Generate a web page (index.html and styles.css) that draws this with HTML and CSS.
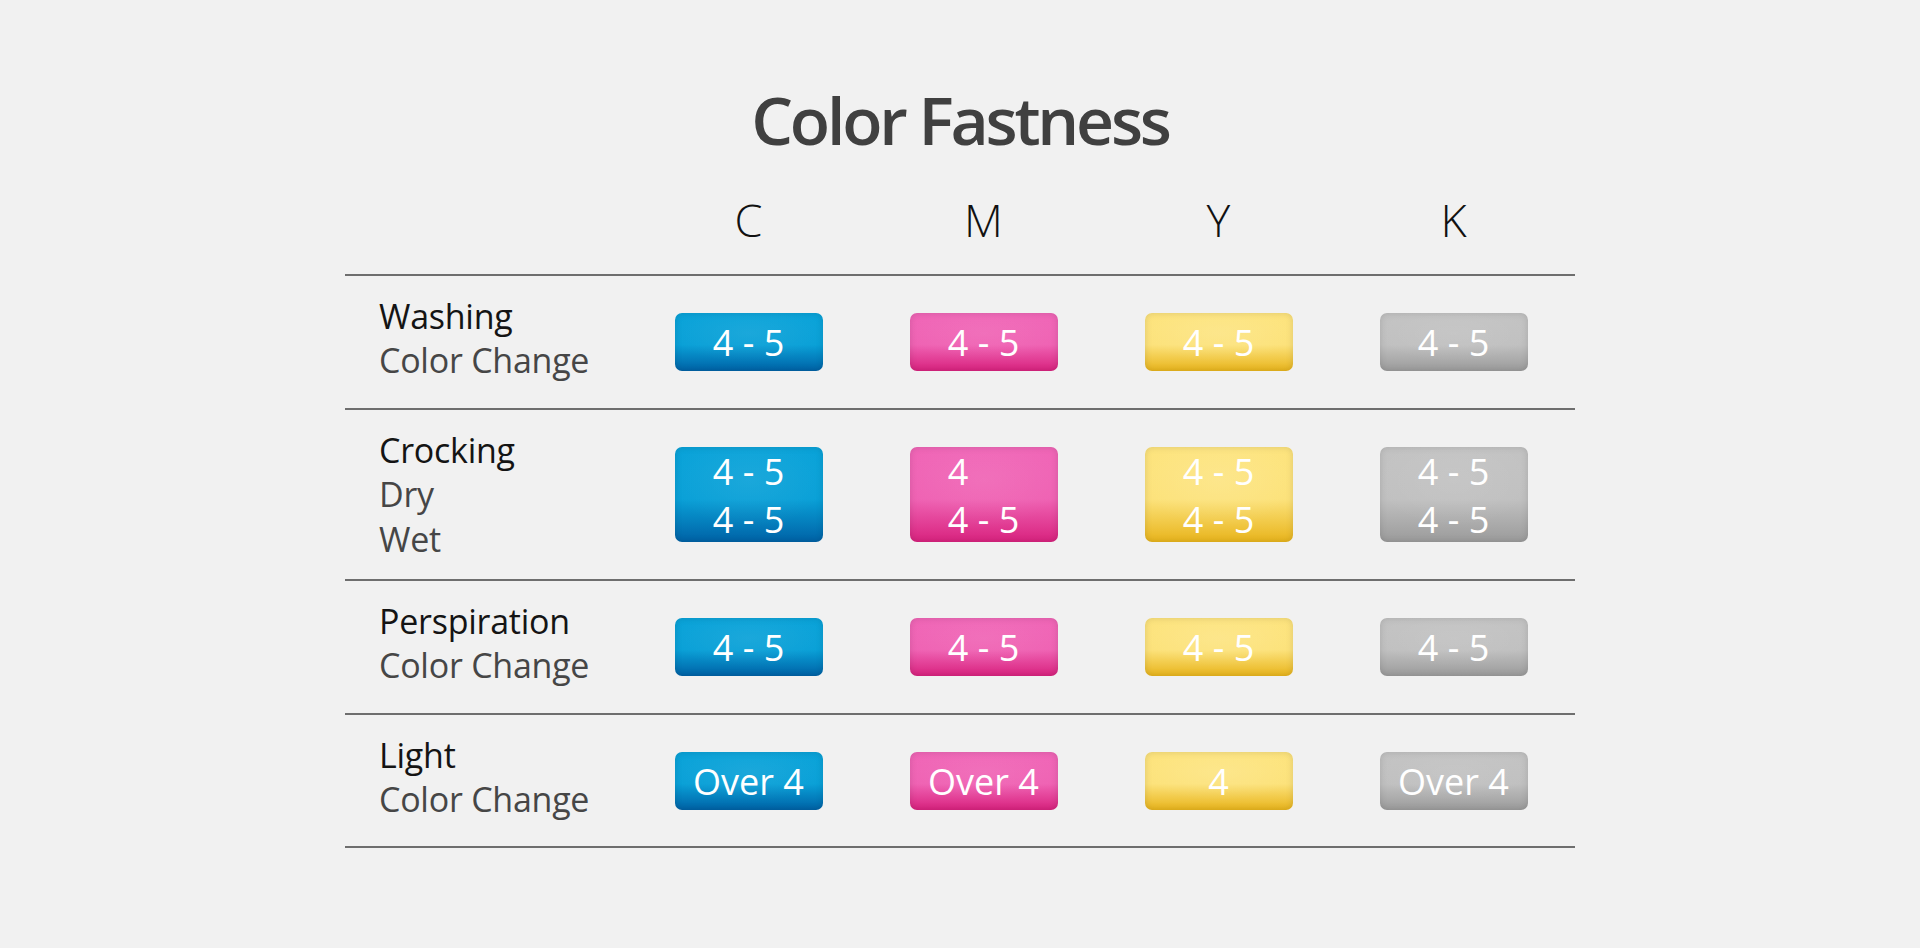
FILE: index.html
```html
<!DOCTYPE html>
<html lang="en">
<head>
<meta charset="utf-8">
<title>Color Fastness</title>
<link rel="stylesheet" href="styles.css">
</head>
<body>
<main class="page">
  <h1 class="title">Color Fastness</h1>
  <section class="table">
    <div class="row head">
      <div class="label"></div>
      <div class="col">C</div>
      <div class="col">M</div>
      <div class="col">Y</div>
      <div class="col">K</div>
    </div>

    <div class="row r1">
      <div class="label lift"><span class="main">Washing</span><span class="sub">Color Change</span></div>
      <div class="cell"><div class="badge cyan"><span>4 - 5</span></div></div>
      <div class="cell"><div class="badge magenta"><span>4 - 5</span></div></div>
      <div class="cell"><div class="badge yellow"><span>4 - 5</span></div></div>
      <div class="cell"><div class="badge gray"><span>4 - 5</span></div></div>
    </div>

    <div class="row r2">
      <div class="label"><span class="main">Crocking</span><span class="sub">Dry</span><span class="sub">Wet</span></div>
      <div class="cell"><div class="badge double cyan"><span>4 - 5<br>4 - 5</span></div></div>
      <div class="cell"><div class="badge double magenta"><span>4<br>4 - 5</span></div></div>
      <div class="cell"><div class="badge double yellow"><span>4 - 5<br>4 - 5</span></div></div>
      <div class="cell"><div class="badge double gray"><span>4 - 5<br>4 - 5</span></div></div>
    </div>

    <div class="row r3">
      <div class="label lift"><span class="main">Perspiration</span><span class="sub">Color Change</span></div>
      <div class="cell"><div class="badge cyan"><span>4 - 5</span></div></div>
      <div class="cell"><div class="badge magenta"><span>4 - 5</span></div></div>
      <div class="cell"><div class="badge yellow"><span>4 - 5</span></div></div>
      <div class="cell"><div class="badge gray"><span>4 - 5</span></div></div>
    </div>

    <div class="row r4">
      <div class="label lift"><span class="main">Light</span><span class="sub">Color Change</span></div>
      <div class="cell"><div class="badge cyan"><span>Over 4</span></div></div>
      <div class="cell"><div class="badge magenta"><span>Over 4</span></div></div>
      <div class="cell"><div class="badge yellow"><span>4</span></div></div>
      <div class="cell"><div class="badge gray"><span>Over 4</span></div></div>
    </div>
  </section>
</main>
</body>
</html>
```

FILE: styles.css
```css
* { box-sizing: border-box; }

html, body {
  margin: 0;
  padding: 0;
  background: #f1f1f1;
}

body {
  font-family: "Open Sans", "Liberation Sans", sans-serif;
  width: 1920px;
  height: 948px;
  overflow: hidden;
}

.page {
  display: flex;
  flex-direction: column;
  align-items: center;
  padding-top: 79px;
}

.title {
  margin: 0 0 31px;
  font-size: 66px;
  line-height: 80px;
  font-weight: 600;
  color: #404040;
  letter-spacing: -3.2px;
}

.table {
  width: 1230px;
  display: flex;
  flex-direction: column;
}

.row {
  display: grid;
  grid-template-columns: 286px repeat(4, 235px);
  align-items: center;
  border-bottom: 2px solid #6e6e6e;
}

.head {
  padding-bottom: 24px;
}

.col {
  text-align: center;
  font-size: 45px;
  line-height: 60px;
  font-weight: 300;
  color: #111;
}

.r1, .r3 { height: 134px; }
.r2 { height: 171px; }
.r4 { height: 133px; }

.label {
  display: flex;
  flex-direction: column;
  padding-left: 34px;
  font-size: 34px;
  line-height: 44px;
  letter-spacing: -0.25px;
}

.label.lift { padding-bottom: 8px; }

.r2 .label .sub { line-height: 44.5px; }

.main { color: #141414; }
.sub { color: #464646; }

.cell {
  display: flex;
  justify-content: center;
}

.badge {
  width: 148px;
  height: 58px;
  border-radius: 7px;
  display: flex;
  align-items: center;
  justify-content: center;
  color: #fff;
  font-size: 36px;
  line-height: 48px;
  box-shadow: inset 0 0 7px rgba(0, 0, 0, 0.13);
}

.badge.double {
  height: 95px;
  line-height: 47.5px;
}

.badge span {
  display: inline-block;
  text-align: left;
  padding-top: 2px;
}

.cyan {
  background:
    radial-gradient(ellipse 55% 50% at 50% 35%, rgba(255, 255, 255, 0.07), rgba(255, 255, 255, 0) 100%),
    linear-gradient(180deg, #0aa3d9 0%, #09a0d7 55%, #0062a6 100%);
}

.magenta {
  background:
    radial-gradient(ellipse 55% 50% at 50% 35%, rgba(255, 255, 255, 0.08), rgba(255, 255, 255, 0) 100%),
    linear-gradient(180deg, #f066b7 0%, #ef62b3 55%, #d8227e 100%);
}

.yellow {
  background:
    radial-gradient(ellipse 55% 50% at 50% 35%, rgba(255, 255, 255, 0.12), rgba(255, 255, 255, 0) 100%),
    linear-gradient(180deg, #fde47e 0%, #fce27a 55%, #e8b41c 100%);
}

.gray {
  background:
    radial-gradient(ellipse 55% 50% at 50% 35%, rgba(255, 255, 255, 0.08), rgba(255, 255, 255, 0) 100%),
    linear-gradient(180deg, #c3c3c3 0%, #c0c0c0 55%, #9b9b9b 100%);
}
```
